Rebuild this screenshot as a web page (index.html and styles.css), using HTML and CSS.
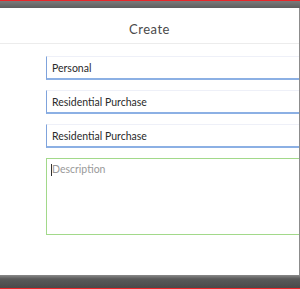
FILE: index.html
```html
<!DOCTYPE html>
<html lang="en">
<head>
    <meta charset="UTF-8">
    <meta name="viewport" content="width=device-width, initial-scale=1.0">
    <title>Create</title>
    <link rel="stylesheet" href="styles.css">
</head>
<body>
    <div class="frame">
        <!-- Top window bar -->
        <div class="bar bar-top"></div>

        <div class="modal">
            <div class="modal-header">Create</div>

            <form class="modal-form">
                <input class="field" type="text" value="Personal">
                <input class="field" type="text" value="Residential Purchase">
                <input class="field" type="text" value="Residential Purchase">
                <div class="desc-wrap">
                    <textarea class="desc" placeholder="Description"></textarea>
                    <span class="caret"></span>
                </div>
            </form>
        </div>

        <!-- Bottom window bar -->
        <div class="bar bar-bottom"></div>
    </div>
</body>
</html>
```

FILE: styles.css
```css
body {
    margin: 0;
    font-family: Lato, "Open Sans", Arial, sans-serif;
    background-color: #ffffff;
}
.frame {
    display: flex;
    flex-direction: column;
    height: 289px;
    overflow: hidden;
}
.bar {
    flex: none;
}
.bar-top {
    height: 7px;
    border-top: 1px solid #e8262a;
    background: linear-gradient(#7a7a7a, #5e5e5e);
}
.bar-bottom {
    height: 13px;
    border-bottom: 1px solid #e8262a;
    background: linear-gradient(#8a8a8a, #5a5a5a 30%, #4a4a4a);
}
.modal {
    flex: 1;
    background-color: #ffffff;
    border-right: 1px solid #8c8c8c;
    overflow: hidden;
}
.modal-header {
    height: 35px;
    line-height: 43px;
    text-align: center;
    font-size: 13px;
    letter-spacing: 0.5px;
    color: #4a4a4a;
    border-bottom: 1px solid #ececec;
}
.modal-form {
    display: flex;
    flex-direction: column;
    gap: 10px;
    padding: 12px 0 0 46px;
}
.field {
    width: 300px;
    height: 24px;
    box-sizing: border-box;
    margin: 0;
    padding: 1px 0 0 5px;
    font-family: Lato, "Open Sans", Arial, sans-serif;
    font-size: 10.5px;
    color: #2a2a2a;
    border: none;
    border-top: 1px solid #eef0f8;
    border-left: 1px solid #7fa3dc;
    border-bottom: 2px solid #8cb0e4;
    outline: none;
}
.desc-wrap {
    position: relative;
}
.desc {
    display: block;
    width: 300px;
    height: 77px;
    box-sizing: border-box;
    margin: 0;
    padding: 4px 0 0 5px;
    font-family: Lato, "Open Sans", Arial, sans-serif;
    font-size: 10.5px;
    border: 1px solid #a2d98a;
    resize: none;
    outline: none;
}
.desc::placeholder {
    color: #9a9a9a;
}
.caret {
    position: absolute;
    left: 5px;
    top: 6px;
    width: 1px;
    height: 12px;
    background-color: #333;
}
```
